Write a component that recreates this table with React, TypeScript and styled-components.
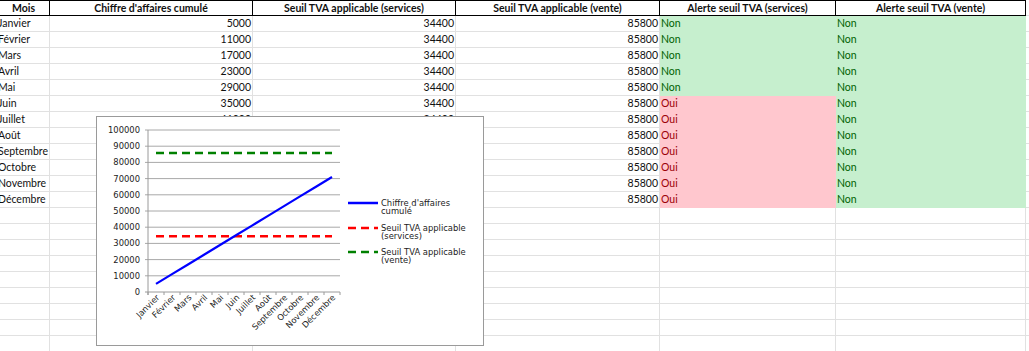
import React from 'react';
import styled, { createGlobalStyle } from 'styled-components';

const GlobalStyle = createGlobalStyle`
  html, body {
    margin: 0;
    padding: 0;
    background: #fff;
    overflow: hidden;
  }
`;

const months = [
  'Janvier',
  'Février',
  'Mars',
  'Avril',
  'Mai',
  'Juin',
  'Juillet',
  'Août',
  'Septembre',
  'Octobre',
  'Novembre',
  'Décembre',
];

const SERVICES = 34400;
const VENTE = 85800;

const rows = months.map((month, i) => ({
  month,
  ca: 5000 + i * 6000,
}));

const colWidths = [53, 203, 203, 204, 176, 190, 40];
const EMPTY_ROWS = 9;

const Sheet = styled.div`
  position: relative;
  width: 1029px;
  height: 351px;
  overflow: hidden;
  font-family: Lato, 'Liberation Sans', sans-serif;
  font-size: 10.5px;
  color: #111;
`;

const Grid = styled.table`
  margin-left: -3px;
  border-collapse: separate;
  border-spacing: 0;
  table-layout: fixed;
  width: ${colWidths.reduce((a, b) => a + b, 0)}px;
`;

const HeadCell = styled.th<{ $first?: boolean; $blank?: boolean }>`
  height: 16px;
  padding: 0 2px;
  box-sizing: border-box;
  font-weight: 700;
  text-align: center;
  white-space: nowrap;
  overflow: hidden;
  line-height: 14px;
  border-top: 1px solid ${(p) => (p.$blank ? 'transparent' : '#000')};
  border-bottom: 1px solid ${(p) => (p.$blank ? '#e1e1e1' : '#000')};
  border-right: 1px solid ${(p) => (p.$blank ? '#e1e1e1' : '#000')};
  border-left: ${(p) => (p.$first ? '1px solid #000' : 'none')};
`;

type Tone = 'plain' | 'ok' | 'alert';

const fills: Record<Tone, string> = {
  plain: '#fff',
  ok: '#c6efce',
  alert: '#ffc7ce',
};

const inks: Record<Tone, string> = {
  plain: '#111',
  ok: '#006100',
  alert: '#9c0006',
};

const Cell = styled.td<{ $tone?: Tone; $num?: boolean }>`
  height: 16px;
  padding: 0 1px;
  box-sizing: border-box;
  line-height: 15px;
  white-space: nowrap;
  overflow: hidden;
  text-align: ${(p) => (p.$num ? 'right' : 'left')};
  background: ${(p) => fills[p.$tone ?? 'plain']};
  color: ${(p) => inks[p.$tone ?? 'plain']};
  border-right: 1px solid
    ${(p) => (p.$tone && p.$tone !== 'plain' ? fills[p.$tone] : '#e1e1e1')};
  border-bottom: 1px solid
    ${(p) => (p.$tone && p.$tone !== 'plain' ? fills[p.$tone] : '#e1e1e1')};
`;

const ChartFrame = styled.div`
  position: absolute;
  left: 96px;
  top: 116px;
  width: 388px;
  height: 230px;
  box-sizing: border-box;
  border: 1px solid #9a9a9a;
  background: #fff;
`;

const ChartSvg = styled.svg`
  display: block;
  font-family: 'DejaVu Sans', sans-serif;
`;

const PL = 51;
const PT = 13;
const PB = 175;
const PW = 192;
const yOf = (v: number) => PB - (v * (PB - PT)) / 100000;
const xOf = (i: number) => PL + 8 + i * 16;

const legend = [
  { color: '#0000ff', dash: undefined, y: 86, lines: ["Chiffre d'affaires", 'cumulé'] },
  { color: '#ff0000', dash: '8 5', y: 111, lines: ['Seuil TVA applicable', '(services)'] },
  { color: '#008000', dash: '8 5', y: 135, lines: ['Seuil TVA applicable', '(vente)'] },
];

const Chart = () => {
  const ticks = Array.from({ length: 11 }, (_, i) => i * 10000);
  const caPoints = rows.map((r, i) => `${xOf(i)},${yOf(r.ca)}`).join(' ');
  return (
    <ChartFrame>
      <ChartSvg width={386} height={228} viewBox="0 0 386 228">
        {ticks.map((t) => (
          <g key={t}>
            <line
              x1={PL - 3}
              x2={PL + PW}
              y1={yOf(t)}
              y2={yOf(t)}
              stroke={t === 0 ? '#9a9a9a' : '#a8a8a8'}
              strokeWidth={1}
            />
            <text x={PL - 8} y={yOf(t) + 3} fontSize={8.4} fill="#222" textAnchor="end">
              {t}
            </text>
          </g>
        ))}
        <line x1={PL} x2={PL} y1={PT} y2={PB + 3} stroke="#9a9a9a" />
        {Array.from({ length: 13 }, (_, i) => (
          <line
            key={i}
            x1={PL + i * 16}
            x2={PL + i * 16}
            y1={PB}
            y2={PB + 3}
            stroke="#9a9a9a"
          />
        ))}
        {months.map((m, i) => (
          <text
            key={m}
            x={xOf(i) + 4}
            y={PB + 6}
            fontSize={8.4}
            fill="#222"
            textAnchor="end"
            transform={`rotate(-45 ${xOf(i) + 4} ${PB + 6})`}
          >
            {m}
          </text>
        ))}
        <line
          x1={xOf(0)}
          x2={xOf(11)}
          y1={yOf(VENTE)}
          y2={yOf(VENTE)}
          stroke="#008000"
          strokeWidth={2.5}
          strokeDasharray="8 5"
        />
        <line
          x1={xOf(0)}
          x2={xOf(11)}
          y1={yOf(SERVICES)}
          y2={yOf(SERVICES)}
          stroke="#ff0000"
          strokeWidth={2.5}
          strokeDasharray="8 5"
        />
        <polyline points={caPoints} fill="none" stroke="#0000ff" strokeWidth={2.2} />
        {legend.map((l) => (
          <g key={l.y}>
            <line
              x1={251}
              x2={281}
              y1={l.y}
              y2={l.y}
              stroke={l.color}
              strokeWidth={2.5}
              strokeDasharray={l.dash}
            />
            {l.lines.map((txt, k) => (
              <text key={k} x={284} y={l.y + 2.5 + k * 8.6} fontSize={8.4} fill="#222">
                {txt}
              </text>
            ))}
          </g>
        ))}
      </ChartSvg>
    </ChartFrame>
  );
};

const headers = [
  'Mois',
  "Chiffre d'affaires cumulé",
  'Seuil TVA applicable (services)',
  'Seuil TVA applicable (vente)',
  'Alerte seuil TVA (services)',
  'Alerte seuil TVA (vente)',
];

export default function App() {
  return (
    <>
      <GlobalStyle />
      <Sheet>
        <Grid>
          <colgroup>
            {colWidths.map((w, i) => (
              <col key={i} style={{ width: w }} />
            ))}
          </colgroup>
          <thead>
            <tr>
              {headers.map((h, i) => (
                <HeadCell key={h} $first={i === 0}>
                  {h}
                </HeadCell>
              ))}
              <HeadCell $blank />
            </tr>
          </thead>
          <tbody>
            {rows.map((r) => {
              const svc = r.ca > SERVICES;
              const vente = r.ca > VENTE;
              return (
                <tr key={r.month}>
                  <Cell>{r.month}</Cell>
                  <Cell $num>{r.ca}</Cell>
                  <Cell $num>{SERVICES}</Cell>
                  <Cell $num>{VENTE}</Cell>
                  <Cell $tone={svc ? 'alert' : 'ok'}>{svc ? 'Oui' : 'Non'}</Cell>
                  <Cell $tone={vente ? 'alert' : 'ok'}>{vente ? 'Oui' : 'Non'}</Cell>
                  <Cell />
                </tr>
              );
            })}
            {Array.from({ length: EMPTY_ROWS }, (_, i) => (
              <tr key={`e${i}`}>
                {colWidths.map((_, j) => (
                  <Cell key={j} />
                ))}
              </tr>
            ))}
          </tbody>
        </Grid>
        <Chart />
      </Sheet>
    </>
  );
}
